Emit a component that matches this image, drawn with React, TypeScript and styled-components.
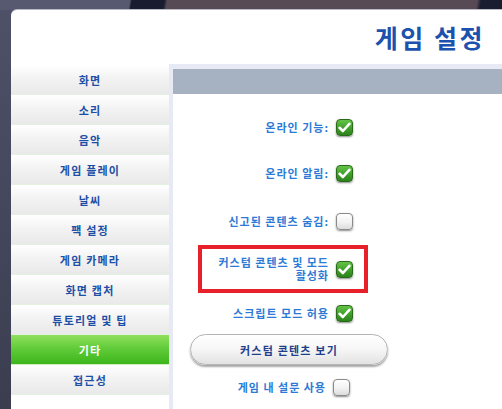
import styled, { createGlobalStyle } from "styled-components";

const GlobalStyle = createGlobalStyle`
  html, body {
    margin: 0;
    padding: 0;
    width: 502px;
    height: 409px;
    overflow: hidden;
  }
  body {
    font-family: "Noto Sans CJK KR", "Noto Sans", sans-serif;
    background:
      linear-gradient(100deg, #565970 0px, #565970 128px, #191c30 130px, #191c30 162px, #574a55 165px, #574a55 470px, #1a1d30 474px) top / 100% 10px no-repeat,
      linear-gradient(180deg, #4f5169 0%, #45475d 50%, #3b3d4f 100%);
  }
`;

const menuItems = [
  "화면",
  "소리",
  "음악",
  "게임 플레이",
  "날씨",
  "팩 설정",
  "게임 카메라",
  "화면 캡처",
  "튜토리얼 및 팁",
  "기타",
  "접근성",
];

const Check = ({ checked }: { checked: boolean }) => (
  <Box $checked={checked}>
    {checked && (
      <svg width="13" height="11" viewBox="0 0 13 11">
        <path
          d="M1.6 5.8 L4.9 9 L11.4 1.8"
          fill="none"
          stroke="#fff"
          strokeWidth="2.6"
          strokeLinecap="round"
          strokeLinejoin="round"
        />
      </svg>
    )}
  </Box>
);

const App = () => {
  return (
    <>
      <GlobalStyle />
      <Screen>
        <Panel>
          <Header>
            <Title>게임 설정</Title>
          </Header>
          <Body>
            <Sidebar>
              {menuItems.map((item) => (
                <MenuItem key={item} $active={item === "기타"}>
                  {item}
                </MenuItem>
              ))}
            </Sidebar>
            <Content>
              <ContentBar />
              <Settings>
                <Row $h={46}>
                  <Label>온라인 기능:</Label>
                  <Check checked />
                </Row>
                <Row $h={47}>
                  <Label>온라인 알림:</Label>
                  <Check checked />
                </Row>
                <Row $h={48}>
                  <Label>신고된 콘텐츠 숨김:</Label>
                  <Check checked={false} />
                </Row>
                <Highlight>
                  <Label>
                    커스텀 콘텐츠 및 모드
                    <br />
                    활성화
                  </Label>
                  <Check checked />
                </Highlight>
                <Row $h={41}>
                  <Label>스크립트 모드 허용</Label>
                  <Check checked />
                </Row>
                <Button>커스텀 콘텐츠 보기</Button>
                <Row $h={44} $shift={3}>
                  <Label>게임 내 설문 사용</Label>
                  <Check checked={false} />
                </Row>
              </Settings>
            </Content>
          </Body>
        </Panel>
      </Screen>
    </>
  );
};

export default App;

const Screen = styled.div`
  width: 502px;
  height: 409px;
  padding: 10px 0 0 11px;
  box-sizing: border-box;
`;

const Panel = styled.div`
  width: 491px;
  height: 399px;
  background: #ffffff;
  border-top-left-radius: 6px;
  box-shadow: 0 -1px 0 #b9bac4;
  display: flex;
  flex-direction: column;
  overflow: hidden;
`;

const Header = styled.div`
  height: 54px;
  display: flex;
  align-items: center;
  justify-content: flex-end;
  padding-right: 17px;
`;

const Title = styled.h1`
  margin: 0;
  font-size: 25px;
  font-weight: 700;
  letter-spacing: 2.5px;
  color: #1b52ad;
  line-height: 1;
`;

const Body = styled.div`
  flex: 1;
  display: flex;
`;

const Sidebar = styled.div`
  width: 158px;
  padding-top: 1px;
  display: flex;
  flex-direction: column;
`;

const MenuItem = styled.div<{ $active?: boolean }>`
  height: 30px;
  box-sizing: border-box;
  display: flex;
  align-items: center;
  justify-content: center;
  font-size: 11px;
  font-weight: 700;
  letter-spacing: 1.2px;
  color: ${(p) => (p.$active ? "#ffffff" : "#1d4fa6")};
  background: ${(p) =>
    p.$active
      ? "linear-gradient(180deg, #8fe05c 0%, #62cc3a 45%, #3db61c 100%)"
      : "linear-gradient(180deg, #ffffff 0%, #f3f3f3 45%, #e9e9e9 100%)"};
  border-bottom: 1px solid ${(p) => (p.$active ? "#cfeec0" : "#e3f2df")};
`;

const Content = styled.div`
  flex: 1;
  background: #e7eaf4;
  padding: 5px 0 0 4px;
  display: flex;
  flex-direction: column;
`;

const ContentBar = styled.div`
  height: 25px;
  background: #a6b1c1;
`;

const Settings = styled.div`
  flex: 1;
  background: #ffffff;
  padding-top: 10px;
  display: flex;
  flex-direction: column;
`;

const Row = styled.div<{ $h: number; $shift?: number }>`
  width: ${(p) => 180 - (p.$shift || 0)}px;
  height: ${(p) => p.$h}px;
  display: flex;
  align-items: center;
  justify-content: flex-end;
  gap: 8px;
`;

const Highlight = styled.div`
  width: 170px;
  height: 48px;
  margin-left: 25px;
  box-sizing: border-box;
  border: 4px solid #e8202a;
  padding-right: 11px;
  display: flex;
  align-items: center;
  justify-content: flex-end;
  gap: 8px;
`;

const Label = styled.span`
  font-size: 11px;
  font-weight: 700;
  letter-spacing: 1px;
  line-height: 13px;
  color: #2c7ad6;
  text-align: right;
  white-space: nowrap;
  margin-right: -1px;
`;

const Box = styled.div<{ $checked: boolean }>`
  width: 17px;
  height: 17px;
  box-sizing: border-box;
  border-radius: 4px;
  display: flex;
  align-items: center;
  justify-content: center;
  flex-shrink: 0;
  border: 1px solid ${(p) => (p.$checked ? "#2a6a1a" : "#8a8a8a")};
  background: ${(p) =>
    p.$checked
      ? "linear-gradient(180deg, #63c447 0%, #3f9f2a 55%, #2d831c 100%)"
      : "linear-gradient(180deg, #ffffff 0%, #f2f2f2 55%, #dcdcdc 100%)"};
  box-shadow: 0 1px 2px rgba(0, 0, 0, 0.45);
`;

const Button = styled.div`
  width: 198px;
  height: 31px;
  margin-left: 17px;
  box-sizing: border-box;
  border-radius: 16px;
  border: 1px solid #b4b4b4;
  background: linear-gradient(180deg, #ffffff 0%, #f6f6f6 50%, #e2e2e2 100%);
  box-shadow: 0 2px 2px rgba(0, 0, 0, 0.35);
  display: flex;
  align-items: center;
  justify-content: center;
  font-size: 11px;
  font-weight: 700;
  letter-spacing: 1.2px;
  color: #1f3f8c;
`;
